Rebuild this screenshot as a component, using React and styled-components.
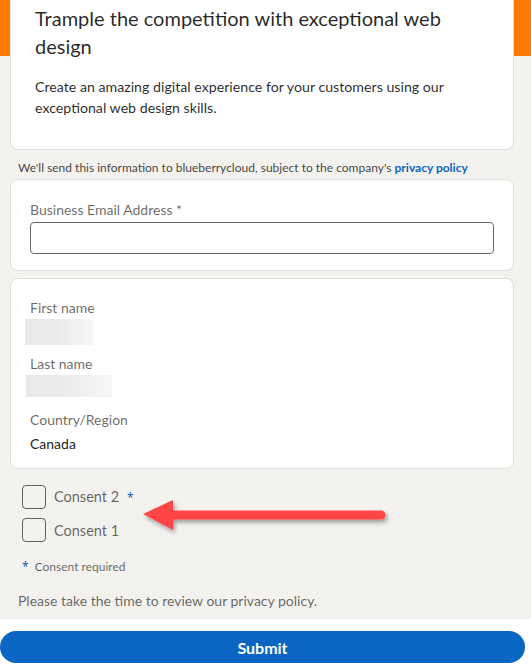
import React from "react";
import styled, { createGlobalStyle } from "styled-components";

const GlobalStyle = createGlobalStyle`
  html, body {
    margin: 0;
    padding: 0;
    background: #ffffff;
  }
  body {
    font-family: Lato, 'Noto Sans', sans-serif;
    color: rgba(0,0,0,0.9);
  }
  * { box-sizing: border-box; }
`

const Page = styled.div`
  width: 531px;
  background: linear-gradient(#ff7a00 0, #ff7a00 56px, #f3f2ef 56px);
  position: relative;
`

const Wrap = styled.div`
  display: flex;
  flex-direction: column;
  padding: 0 17px 8px 10px;
`

const Card = styled.div`
  background: #ffffff;
  border: 1px solid #e0dfdc;
  border-top: ${p => (p.$cut ? "none" : "1px solid #e0dfdc")};
  border-radius: ${p => (p.$cut ? "0 0 8px 8px" : "8px")};
  padding: ${p => p.$pad};
  margin-top: ${p => p.$mt || "0px"};
`

const Title = styled.h1`
  margin: 0;
  font-size: 20px;
  font-weight: 400;
  line-height: 28px;
  color: rgba(0,0,0,0.85);
`

const Lead = styled.p`
  margin: 16px 0 0;
  font-size: 14.2px;
  line-height: 21px;
  color: rgba(0,0,0,0.85);
`

const Notice = styled.p`
  margin: 10px 0 3px 8px;
  font-size: 12px;
  line-height: 16px;
  color: rgba(0,0,0,0.75);
  a {
    color: #0a66c2;
    font-weight: 700;
    text-decoration: none;
  }
`

const Label = styled.div`
  font-size: 14px;
  line-height: 20px;
  color: rgba(0,0,0,0.6);
  margin-top: ${p => p.$mt || "0px"};
`

const Value = styled.div`
  font-size: 14px;
  line-height: 20px;
  color: rgba(0,0,0,0.9);
  margin-top: 4px;
`

const TextInput = styled.input`
  display: block;
  width: 100%;
  height: 32px;
  margin-top: 2px;
  border: 1px solid #666666;
  border-radius: 4px;
  outline: none;
  font-size: 14px;
  padding: 0 8px;
  font-family: inherit;
`

const Blurred = styled.div`
  width: ${p => p.$w}px;
  height: ${p => p.$h}px;
  margin: 1px 0 0 ${p => p.$ml}px;
  background: linear-gradient(90deg, #e9e9e9 0%, #ebebeb 45%, #f6f6f6 100%);
`

const Consents = styled.div`
  display: flex;
  flex-direction: column;
  gap: 9px;
  margin: 16px 0 0 12px;
`

const ConsentRow = styled.label`
  display: flex;
  align-items: center;
  gap: 8px;
  font-size: 14.5px;
  color: rgba(0,0,0,0.6);
  height: 24px;
`

const Box = styled.span`
  width: 24px;
  height: 24px;
  border: 1px solid rgba(0,0,0,0.6);
  border-radius: 4px;
  background: transparent;
`

const Star = styled.span`
  color: #0a66c2;
  font-family: 'Noto Sans', sans-serif;
  font-size: 12px;
  margin-left: ${p => p.$ml || "0px"};
  margin-right: ${p => p.$mr || "0px"};
`

const Required = styled.div`
  margin: 17px 0 0 12px;
  font-size: 12px;
  line-height: 16px;
  color: rgba(0,0,0,0.6);
  display: flex;
  align-items: center;
`

const Review = styled.p`
  margin: 16px 0 0 8px;
  font-size: 14px;
  line-height: 20px;
  color: rgba(0,0,0,0.6);
`

const Footer = styled.div`
  background: #ffffff;
  padding: 12px 6px 6px 0;
`

const SubmitButton = styled.button`
  display: block;
  width: 525px;
  height: 32px;
  border: none;
  border-radius: 16px;
  background: #0a66c2;
  color: #ffffff;
  font-family: inherit;
  font-size: 16px;
  font-weight: 700;
  cursor: pointer;
`

const Arrow = styled.svg`
  position: absolute;
  left: 138px;
  top: 494px;
  overflow: visible;
`

export default function App() {
  return (
    <>
      <GlobalStyle />
      <Page>
        <Wrap>
          <Card $cut $pad="4px 24px 31px 24px">
            <Title>Trample the competition with exceptional web design</Title>
            <Lead>
              Create an amazing digital experience for your customers using our exceptional web
              design skills.
            </Lead>
          </Card>
          <Notice>
            We'll send this information to blueberrycloud, subject to the company's{" "}
            <a href="#">privacy policy</a>
          </Notice>
          <Card $pad="20px 19px 16px 19px">
            <Label>Business Email Address *</Label>
            <TextInput type="text" />
          </Card>
          <Card $mt="7px" $pad="19px 19px 14px 19px">
            <Label>First name</Label>
            <Blurred $w={68} $h={26} $ml={-5} />
            <Label $mt="9px">Last name</Label>
            <Blurred $w={86} $h={22} $ml={-4} />
            <Label $mt="13px">Country/Region</Label>
            <Value>Canada</Value>
          </Card>
          <Consents>
            <ConsentRow>
              <Box />
              <span>
                Consent 2<Star $ml="8px">*</Star>
              </span>
            </ConsentRow>
            <ConsentRow>
              <Box />
              <span>Consent 1</span>
            </ConsentRow>
          </Consents>
          <Required>
            <Star $mr="6px">*</Star>Consent required
          </Required>
          <Review>Please take the time to review our privacy policy.</Review>
        </Wrap>
        <Footer>
          <SubmitButton type="button">Submit</SubmitButton>
        </Footer>
        <Arrow width="250" height="40" viewBox="0 0 250 40">
          <defs>
            <filter id="shadow" x="-10%" y="-40%" width="130%" height="200%">
              <feDropShadow dx="2" dy="3" stdDeviation="2" floodColor="#000" floodOpacity="0.35" />
            </filter>
          </defs>
          <g filter="url(#shadow)">
            <line x1="32" y1="21" x2="243" y2="21" stroke="#ff4545" strokeWidth="9" strokeLinecap="round" />
            <polygon points="5,20 35,6 35,36" fill="#ff4545" />
          </g>
        </Arrow>
      </Page>
    </>
  );
}
